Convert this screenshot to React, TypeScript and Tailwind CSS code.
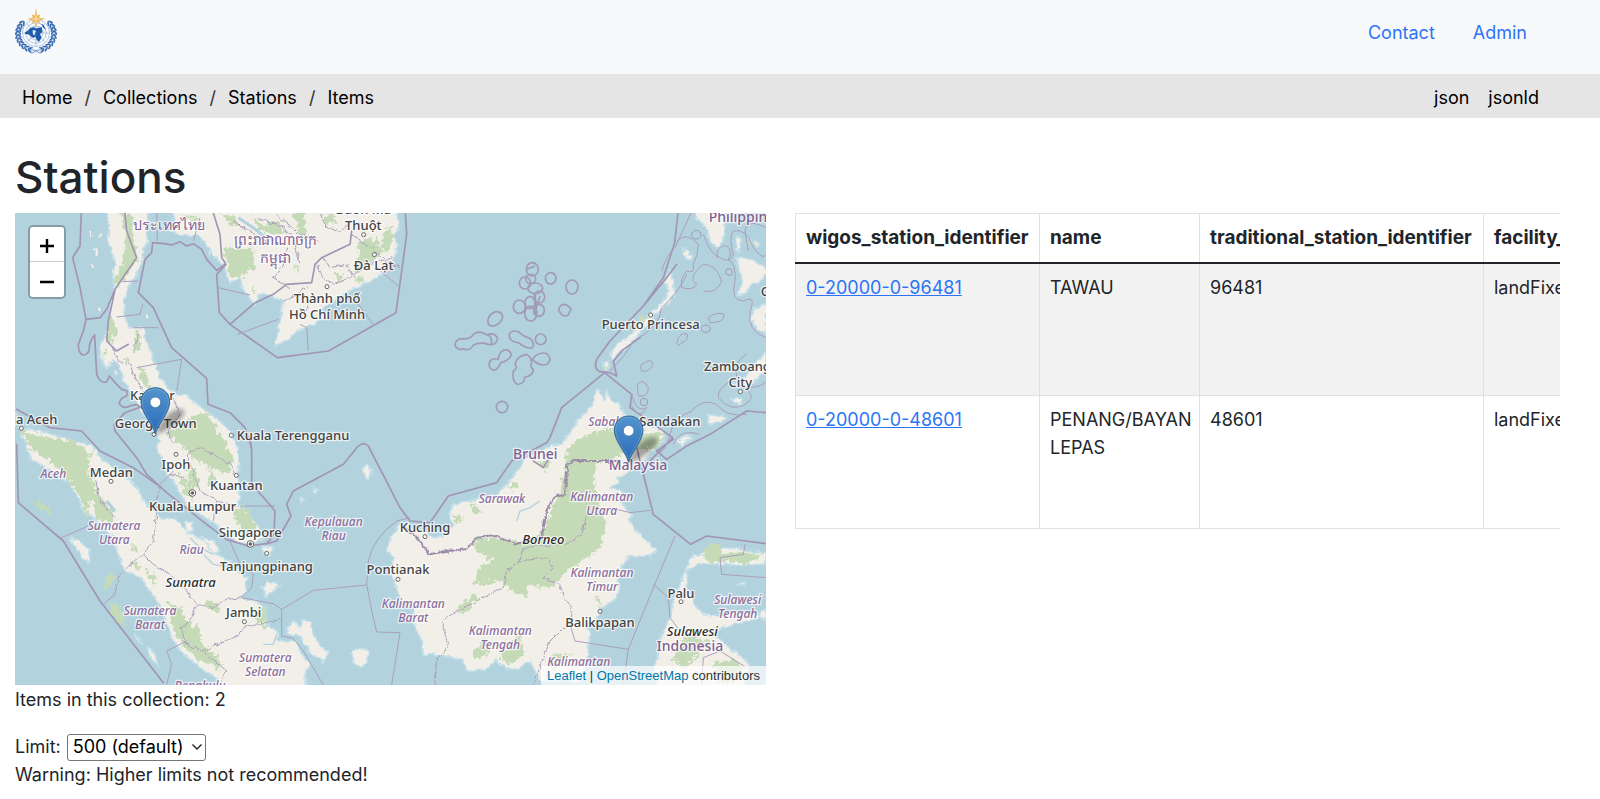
import React from "react";

type LabelKind = "city" | "province" | "country" | "island";
type Label = [number, number, string, LabelKind, ("start" | "end")?];

const labels: Label[] = [
  [507, 687, "ประเทศไทย", "country"],
  [825, 733, "ព្រះរាជាណាចក្រ", "country"],
  [826, 785, "កម្ពុជា", "country"],
  [1090, 638, "Buôn Ma", "city"],
  [1090, 687, "Thuột", "city"],
  [1121, 806, "Đà Lạt", "city"],
  [981, 905, "Thành phố", "city"],
  [981, 953, "Hồ Chí Minh", "city"],
  [457, 1197, "Kangar", "city"],
  [467, 1280, "George Town", "city"],
  [172, 1269, "Banda Aceh", "city", "end"],
  [710, 1316, "Kuala Terengganu", "city", "start"],
  [2126, 662, "Philippines", "country", "start"],
  [1952, 985, "Puerto Princesa", "city"],
  [2112, 1111, "Zamboanga", "city", "start"],
  [2221, 1159, "City", "city"],
  [2282, 884, "Cebu", "city", "start"],
  [1765, 1274, "Sabah", "province", "start"],
  [1918, 1275, "Sandakan", "city", "start"],
  [528, 1405, "Ipoh", "city"],
  [334, 1428, "Medan", "city"],
  [160, 1431, "Aceh", "province"],
  [709, 1467, "Kuantan", "city"],
  [578, 1529, "Kuala Lumpur", "city"],
  [342, 1587, "Sumatera", "province"],
  [343, 1629, "Utara", "province"],
  [751, 1607, "Singapore", "city"],
  [1001, 1574, "Kepulauan", "province"],
  [1001, 1617, "Riau", "province"],
  [575, 1660, "Riau", "province"],
  [799, 1710, "Tanjungpinang", "city"],
  [572, 1759, "Sumatra", "island"],
  [731, 1849, "Jambi", "city"],
  [450, 1842, "Sumatera", "province"],
  [450, 1885, "Barat", "province"],
  [796, 1983, "Sumatera", "province"],
  [796, 2025, "Selatan", "province"],
  [600, 2067, "Bengkulu", "province"],
  [1606, 1375, "Brunei", "country"],
  [1914, 1406, "Malaysia", "country"],
  [1506, 1505, "Sarawak", "province"],
  [1805, 1501, "Kalimantan", "province"],
  [1805, 1543, "Utara", "province"],
  [1275, 1592, "Kuching", "city"],
  [1630, 1630, "Borneo", "island"],
  [1194, 1719, "Pontianak", "city"],
  [1806, 1727, "Kalimantan", "province"],
  [1806, 1769, "Timur", "province"],
  [2043, 1791, "Palu", "city"],
  [1240, 1821, "Kalimantan", "province"],
  [1240, 1864, "Barat", "province"],
  [2213, 1808, "Sulawesi", "province"],
  [2213, 1850, "Tengah", "province"],
  [1800, 1877, "Balikpapan", "city"],
  [1501, 1901, "Kalimantan", "province"],
  [1501, 1943, "Tengah", "province"],
  [2077, 1905, "Sulawesi", "island"],
  [2070, 1949, "Indonesia", "country"],
  [1736, 1994, "Kalimantan", "province"],
];

const labelStyle: Record<LabelKind, string> = {
  city: "fill-[#444444] text-[39px] font-medium",
  province: "fill-[#8d6e9b] text-[36px] italic font-medium",
  country: "fill-[#816090] text-[42px] font-medium",
  island: "fill-[#2d2d2d] text-[39px] italic font-medium",
};

const towns: [number, number][] = [
  [1091, 701], [1123, 761], [981, 857], [64, 1282], [694, 1303], [1952, 942], [2221, 1172],
  [528, 1360], [333, 1441], [709, 1423], [800, 1657], [733, 1862], [1275, 1607], [1194, 1735],
  [1800, 1831], [2043, 1802], [462, 1300],
];

const capitals: [number, number][] = [[577, 1476], [751, 1629]];

const reefs: [number, number, number, number][] = [
  [457, 205, 18, 20], [452, 234, 15, 14], [435, 246, 17, 18], [466, 262, 22, 16], [512, 232, 16, 17],
  [576, 258, 18, 21], [478, 288, 16, 18], [418, 317, 18, 20], [450, 305, 15, 18], [477, 328, 16, 18],
  [452, 338, 18, 22], [482, 415, 16, 16], [366, 618, 17, 17], [792, 603, 11, 11], [1047, 213, 10, 10],
  [949, 101, 14, 13], [977, 383, 14, 11],
];

function Pin({ x, y }: { x: number; y: number }) {
  return (
    <g transform={`translate(${x} ${y})`}>
      <path d="M0 0C14-52 62-88 84-74 100-58 42-12 0 0Z" fill="#000" opacity=".33" filter="url(#soft)" />
      <path
        d="M0-2C-6-28-43-66-43-98-43-124-24-141 0-141S43-124 43-98C43-66 6-28 0-2Z"
        fill="url(#pinFill)"
        stroke="#2e6c97"
        strokeWidth="3"
      />
      <path d="M0-12C-7-34-39-69-39-98-39-121-22-137 0-137S39-121 39-98C39-69 7-34 0-12Z" fill="none" stroke="#fff" strokeOpacity=".15" strokeWidth="3" />
      <circle cy="-97" r="16" fill="#fff" stroke="#2e6c97" strokeWidth="2" />
    </g>
  );
}

function StationMap() {
  return (
    <svg
      viewBox="45 636 2253 1416"
      preserveAspectRatio="xMidYMid slice"
      className="block h-full w-full"
      role="img"
      aria-label="Map of stations"
    >
      <defs>
        <linearGradient id="pinFill" x1="0" y1="0" x2="0" y2="1">
          <stop offset="0" stopColor="#5394cd" />
          <stop offset="1" stopColor="#2a69b8" />
        </linearGradient>
        <filter id="soft" x="-30%" y="-30%" width="160%" height="160%">
          <feGaussianBlur stdDeviation="7" />
        </filter>
        <filter id="coast" filterUnits="userSpaceOnUse" x="0" y="600" width="2400" height="1500">
          <feTurbulence type="fractalNoise" baseFrequency="0.06" numOctaves="3" seed="4" />
          <feDisplacementMap in="SourceGraphic" scale="16" xChannelSelector="R" yChannelSelector="G" />
        </filter>
        <filter id="wood" filterUnits="userSpaceOnUse" x="0" y="600" width="2400" height="1500">
          <feTurbulence type="fractalNoise" baseFrequency="0.07" numOctaves="3" seed="9" />
          <feDisplacementMap in="SourceGraphic" scale="34" xChannelSelector="R" yChannelSelector="G" />
        </filter>
      </defs>
      <rect x="0" y="600" width="2400" height="1500" fill="#b2d2dd" />

      {/* Land masses */}
      <g filter="url(#coast)" fill="#f2efe9" stroke="#c3dfe9" strokeWidth="5" strokeLinejoin="round">
        <path d="M312 600L328 670 322 720 345 780 338 830 345 870 332 900 326 980 302 1030 300 1070 322 1105 340 1075 362 1100 365 1130 385 1160 400 1190 432 1240 462 1290 480 1320 472 1340 488 1380 500 1415 520 1440 540 1475 560 1510 600 1540 640 1565 680 1600 720 1625 750 1632 780 1620 790 1605 770 1570 740 1535 715 1510 720 1480 712 1430 718 1380 712 1340 700 1310 690 1290 660 1260 600 1215 560 1180 530 1180 505 1160 480 1130 470 1095 455 1060 440 1020 430 980 385 980 372 940 372 900 385 860 408 825 424 790 430 750 442 720 444 600Z" />
        <path d="M520 600L520 670 508 690 540 702 600 706 625 740 650 770 670 795 690 845 722 830 725 860 748 890 768 915 776 880 800 878 850 900 840 960 830 1010 822 1034 862 1020 890 990 950 965 990 940 955 928 1000 900 1050 870 1090 850 1130 830 1160 810 1182 780 1190 730 1184 700 1200 680 1180 600Z" />
        <path d="M60 1280L100 1288 150 1298 200 1314 250 1326 280 1335 300 1370 370 1420 420 1470 440 1512 465 1530 480 1550 530 1555 560 1590 612 1620 650 1660 702 1690 720 1720 745 1730 735 1750 740 1770 725 1790 770 1800 795 1820 800 1870 835 1895 830 1920 890 1920 900 1950 930 1990 915 2020 920 2080 660 2080 650 2030 600 2000 550 1960 520 1920 500 1860 480 1810 450 1770 420 1730 375 1710 355 1660 340 1610 290 1555 255 1540 235 1490 200 1440 150 1410 90 1370Z" />
        <path d="M1200 1570L1170 1610 1160 1650 1180 1670 1175 1720 1195 1780 1240 1820 1245 1880 1265 1920 1270 1965 1305 1960 1390 1975 1400 2010 1460 2005 1485 1980 1520 2000 1545 2008 1590 1980 1620 2040 1740 2040 1765 1960 1765 1920 1775 1900 1760 1880 1790 1850 1805 1820 1840 1800 1860 1765 1855 1740 1865 1700 1885 1665 1950 1665 1970 1650 1940 1620 1910 1590 1885 1555 1897 1545 1875 1520 1860 1500 1865 1470 1830 1460 1860 1445 1850 1430 1890 1412 1925 1385 1960 1350 1990 1320 1995 1290 1940 1270 1870 1240 1860 1210 1830 1195 1822 1165 1810 1200 1798 1165 1785 1170 1780 1210 1740 1250 1712 1290 1690 1325 1640 1340 1600 1360 1570 1380 1550 1410 1520 1450 1490 1480 1430 1495 1360 1510 1345 1540 1360 1570 1340 1600 1300 1610 1270 1590 1230 1575Z" />
        <path d="M2298 1655L2240 1650 2180 1640 2140 1635 2110 1660 2075 1665 2060 1700 2045 1740 2035 1760 2020 1800 2010 1850 1985 1900 1975 1960 1960 2000 1975 2060 2230 2060 2250 1990 2215 1960 2180 1935 2150 1905 2145 1885 2190 1875 2240 1860 2298 1840 2250 1840 2200 1835 2140 1845 2110 1840 2085 1810 2060 1760 2060 1710 2095 1690 2150 1690 2230 1692 2298 1690Z" />
        <path d="M1828 1060L1850 1030 1890 1000 1930 960 1960 930 1995 895 2005 870 1995 840 2010 805 2020 845 2025 880 2000 910 1960 945 1930 985 1890 1030 1850 1060 1838 1075Z" />
        <path d="M1815 1110L1808 1090 1822 1078 1828 1100Z" />
        <path d="M2080 600L2090 650 2120 680 2130 720 2155 745 2172 710 2170 600Z" />
        <path d="M2210 770L2255 775 2298 800 2298 830 2260 850 2230 880 2212 885 2225 845Z" />
        <path d="M2298 910L2265 920 2250 950 2275 990 2298 1000Z" />
        <path d="M2298 1050L2265 1090 2225 1140 2190 1150 2240 1160 2298 1110Z" />
        <path d="M2045 740L2065 750 2078 770 2060 780Z" />
        <path d="M2210 708L2222 710 2218 755 2208 745Z M2245 710L2280 728 2270 738Z" />
        <path d="M2195 1195L2228 1190 2220 1215 2205 1208Z M2120 1245L2165 1240 2180 1255 2130 1270Z M2030 1320L2060 1300 2075 1310 2045 1335Z" />
        <path d="M860 1880L880 1860 900 1880 910 1855 935 1862 940 1900 960 1935 985 1950 970 1985 925 1950 900 1905 865 1900Z" />
        <path d="M1055 1950L1080 1938 1105 1950 1100 1990 1080 1998 1058 1985Z" />
        <path d="M210 1612L235 1615 270 1650 268 1685 250 1675Z M405 1895L428 1930 410 1915Z M440 1935L465 1960 476 1998 448 1965Z" />
        <path d="M555 1565L578 1562 580 1585 562 1600Z M600 1605L640 1620 660 1650 640 1655Z M785 1760L800 1740 838 1752 800 1790Z" />
        <path d="M1085 1405L1100 1390 1118 1410 1100 1438Z M900 1490L915 1490 905 1505Z M940 1460L955 1470 945 1480Z M785 1635L820 1640 810 1665 790 1660Z" />
        <path d="M2280 1830L2298 1825 2298 1860 2282 1850Z M2210 1750L2240 1740 2230 1755Z" />
        <path d="M270 690L275 705M285 740L290 765M300 700L302 712M295 920L300 930M275 790L280 800M625 750L632 760M440 940L443 950M345 1110L350 1120" stroke="#f2efe9" strokeWidth="6" />
      </g>

      {/* Forest cover */}
      <g filter="url(#wood)" fill="#c5dab6">
        <path d="M360 630L395 640 402 720 410 770 385 820 355 860 340 850 365 790 380 720Z" />
        <path d="M325 950L345 960 348 1000 330 1030 318 1010Z M405 1000L425 980 420 1050 400 1060Z M415 1090L440 1120 450 1160 425 1150Z M310 1040L322 1050 315 1080Z M375 1060L390 1075 380 1090Z" />
        <path d="M670 740L760 745 765 800 720 830 690 830Z M880 640L910 620 920 700 905 720Z M1080 720L1130 710 1150 760 1110 780 1060 830Z M1145 690L1180 680 1175 740 1150 750Z M750 640L800 680 820 660 860 690 830 700 780 690Z M1000 820L1030 820 1020 850Z" />
        <path d="M660 640L700 645 720 680 690 670Z M960 650L1000 640 1010 665 980 670Z M880 790L900 800 890 820Z M760 850L772 880 762 890Z M540 640L600 650 590 665Z M1060 840L1090 820 1085 845Z" />
        <path d="M500 1300L560 1260 620 1230 660 1300 700 1370 690 1420 640 1400 590 1380 540 1330Z M560 1400L590 1410 600 1450 570 1470Z M530 1420L555 1430 580 1500 555 1480Z M690 1520L740 1520 770 1580 730 1600Z M630 1400L650 1430 640 1470 620 1440Z" />
        <path d="M65 1290L140 1310 220 1320 270 1355 265 1420 275 1480 260 1550 235 1480 200 1430 140 1370 90 1340Z" />
        <path d="M270 1400L290 1480 340 1530 330 1570 290 1550 270 1480Z M390 1620L420 1660 400 1650Z M435 1700L470 1730 460 1760Z M385 1680L420 1690 415 1705Z" />
        <path d="M500 1800L545 1820 555 1860 600 1880 600 1930 650 1960 665 2000 600 1980 560 1940 520 1890Z M620 1795L665 1820 655 1835 625 1820Z M770 1820L800 1830 795 1880 770 1870Z M330 1810L355 1808 380 1875 345 1860Z M95 1500L120 1502 160 1540 130 1530Z" />
        <path d="M1700 1350L1800 1325 1840 1330 1800 1380 1780 1430 1800 1520 1820 1570 1800 1640 1760 1670 1700 1710 1650 1760 1580 1750 1580 1790 1540 1770 1500 1740 1420 1750 1440 1700 1480 1680 1420 1640 1430 1610 1500 1610 1560 1625 1620 1600 1640 1560 1670 1490 1695 1420Z" />
        <path d="M1700 1340L1760 1300 1850 1280 1900 1330 1830 1380 1720 1385Z M1900 1300L1990 1290 1980 1340 1900 1350Z" />
        <path d="M1530 1440L1560 1450 1530 1470Z M1610 1380L1660 1380 1640 1410Z M1370 1820L1420 1780 1440 1790 1390 1840Z M1420 1950L1460 1910 1460 1960 1430 1980Z M1500 1960L1560 1900 1570 1960 1540 1990 1500 1975Z M1780 1780L1800 1790 1800 1820Z M1650 1960L1720 1960 1650 2010Z" />
        <path d="M2110 1660L2125 1630 2165 1630 2170 1660 2230 1650 2280 1670 2230 1690 2180 1680 2120 1685Z M2010 1980L2060 1900 2150 1930 2100 1950 2060 2000Z M2140 1990L2200 1970 2230 2000 2200 2050 2150 2040Z" />
        <path d="M1910 955L1950 940 1930 965Z M2045 740L2060 755 2050 755Z M1812 1092L1822 1090 1818 1105Z M2250 720L2270 725 2260 732Z M1410 1500L1440 1530 1420 1540Z M1350 1540L1390 1550 1370 1570Z" />
        <path d="M1820 1142L1832 1140 1826 1150Z M325 1720L345 1725 320 1770 310 1755Z" />
      </g>

      {/* Rivers */}
      <g fill="none" stroke="#b2d2dd" strokeWidth="4">
        <path d="M1550 1560L1560 1530 1590 1520 1620 1500M640 1660L600 1640 570 1610M700 1700L640 1690 610 1660M830 1900L820 1930 790 1930M1330 1600L1350 1580" />
        <path d="M715 650L760 680 790 705M320 1500L345 1530 330 1520" strokeWidth="9" />
      </g>

      {/* Maritime boundaries */}
      <g fill="none" stroke="#a295b4" strokeWidth="5" strokeLinejoin="round" strokeLinecap="round">
        <path d="M244 636L240 735 218 770 240 860 258 955 250 990 235 1030Q235 1060 250 1062 270 1060 268 1035 272 1015 284 1002L290 1120Q300 1148 320 1143L328 1125 350 1150 365 1165 382 1170 380 1185Q360 1190 358 1208 370 1226 390 1215L410 1210 430 1225" />
        <path d="M430 1215L375 1235 342 1270 345 1290 410 1370 440 1420 500 1475 620 1570 680 1615 745 1635 800 1628 822 1600 825 1530 800 1500 755 1450 755 1350 750 1310" />
        <path d="M375 636L380 690 410 770 345 865 320 925 300 950 258 955M345 865L325 960 320 1020 350 1050 385 1030" />
        <path d="M458 725L495 728 515 732 540 722 560 735 580 728 605 745 620 775 650 808 675 790M458 725L455 755 435 775 415 875 460 920 515 1040 620 1132 624 1210 690 1235 735 1280 755 1340" />
        <path d="M640 636L660 700 665 770 678 790 650 820 658 935 690 970 832 1070 985 1050 1188 935 1220 700 1216 636M690 970L765 905 820 880 860 850 935 845 945 790 965 770 1050 730 1055 690" />
        <path d="M50 1225L150 1280 245 1290 300 1350 400 1400 470 1450M50 1330L55 1505 190 1620 300 1800 490 2045" />
        <path d="M800 1628L830 1620 873 1545 860 1510 880 1470 1030 1390 1072 1338Q1090 1320 1105 1335L1200 1520 1230 1560 1290 1565 1345 1485 1490 1445 1535 1380 1640 1325 1650 1310 1685 1220 1814 1115 1895 1180 1890 1220 2018 1310 1940 1390" />
        <path d="M2034 636L2024 725 1990 830 1930 915 1830 1020 1790 1075Q1780 1105 1800 1112L1830 1115 1850 1125 1840 1080 1870 1045 1920 1010M1930 915L2000 830 2030 790" />
        <path d="M1910 1340L1960 1540 2072 1630 2120 1605 2298 1628M2298 1235L2240 1230 2130 1300 2060 1335 2000 1375 1970 1350 2020 1315" />
        <path d="M1215 1580L1240 1600 1290 1660 1340 1650 1400 1645 1430 1610 1490 1605 1545 1630 1625 1610 1640 1530 1660 1490 1695 1480 1702 1390 1720 1380 1850 1380" strokeWidth="6" stroke="#9c8caa" filter="url(#coast)" />
        <path d="M1600 1380L1630 1400 1645 1375" />
      </g>

      {/* Provincial borders and territorial waters */}
      <g fill="none" stroke="#ab9fbc" strokeWidth="3" strokeLinejoin="round">
        <path d="M365 842L415 840M350 948L420 940 428 910M400 980L475 980M410 1100L545 1075 530 1170M712 1000L835 955M925 1050L920 980 900 970M1120 970L1060 890M1130 800L1195 855M655 860L750 882M470 636L472 720M580 720L600 650" />
        <g filter="url(#coast)">
          <path d="M340 1040L355 1080 390 1090 400 1120 430 1170M770 650L850 680 880 710 900 790M950 790L970 830 1000 850 1050 830 1100 790 1180 770M830 640L900 700 960 720M1050 700L1110 740 1160 780 1200 800" />
          <path d="M960 640L980 680 1020 690 1060 660 1100 680M860 740L850 790 820 830 870 860M700 660L760 700 800 720 840 710M970 770L990 800 1040 790 1060 830M900 870L930 900 910 940M850 900L890 880 920 860M415 1000L400 1040M500 1290L520 1330" />
          <path d="M510 1170L540 1240 500 1300M560 1360L600 1340 640 1360 690 1390 705 1420M560 1360L590 1440 600 1470 650 1500 735 1520M510 1420L560 1430M640 1560L650 1500" />
          <path d="M345 1780L355 1730 390 1690 430 1660 460 1620 470 1540 480 1450M430 1660L460 1690 510 1720 560 1770 590 1810 640 1820 680 1795 725 1790" />
          <path d="M590 1810L570 1860 540 1880 560 1930 610 1950 720 1900 730 1880 845 1855M280 1400L300 1500 345 1550M610 1950L680 2010 660 2052" />
          <path d="M1305 2052L1310 1970 1345 1940 1325 1860 1370 1830 1510 1760 1520 1710 1560 1680 1640 1670 1660 1700 1630 1730 1680 1750 1690 1790 1715 1820 1710 1860 1650 1920 1600 2052M1560 1680L1570 1640 1710 1625 1745 1600 1760 1540" />
        </g>
        <path d="M825 1515L735 1515M690 1620L720 1690 760 1720 755 1760 725 1790M180 1612L265 1575M310 1810L345 1780M480 1450L520 1410M725 1790L820 1808 845 1825 845 1905 880 1912 910 1950 970 2052M500 2050L515 1990 500 1950 560 1920" />
        <path d="M845 1825L940 1768 1100 1752M1230 1550L1190 1560Q1120 1610 1105 1680L1100 1750 1115 1830 1130 1893 1200 1895 1175 2052" />
        <path d="M1830 1520L1890 1535 1950 1528M2025 1605L1960 1760 1885 1945 1870 2052M1885 1945L1725 1920 1710 1870M1960 1750L2005 1790 2010 1850 2040 1890 2090 1910M2235 1630L2230 1660 2160 1670 2165 1720 2298 1730M2105 2050L2110 1970 2160 1950 2240 2000" />
        <path d="M2030 720Q2060 690 2095 730Q2095 760 2080 790Q2085 820 2060 810Q2040 830 2045 860Q2080 870 2090 850Q2060 830 2110 790Q2150 790 2165 840Q2150 880 2110 870M1985 810Q2000 760 2025 740L2080 620M2110 700Q2130 760 2160 770Q2190 790 2200 760Q2185 710 2200 690Q2240 680 2260 740Q2290 780 2298 760M2150 770Q2150 730 2180 735Q2200 750 2185 775Q2210 790 2205 840Q2190 900 2230 900Q2270 880 2250 930Q2240 990 2298 1010M2298 680Q2240 650 2235 690L2245 750" />
        <path d="M2240 1060Q2200 1080 2210 1130Q2150 1160 2155 1190Q2190 1230 2225 1215Q2280 1190 2230 1160Q2290 1160 2298 1140M2075 1230Q2110 1190 2150 1210Q2180 1250 2240 1240M2075 1230Q2020 1250 2010 1300Q2000 1350 1970 1360M1895 1180Q1910 1240 1940 1220Q1920 1260 1895 1215M2020 1330Q2040 1280 2100 1300" />
        <path d="M1925 1110Q1915 1090 1935 1085Q1955 1070 1958 1090Q1950 1115 1925 1110ZM2030 1025Q2040 990 2062 1000Q2065 1020 2045 1025Q2035 1040 2030 1025ZM2125 950Q2150 930 2172 940Q2175 965 2130 965ZM1912 1150Q1930 1130 1945 1160Q1945 1190 1915 1185Z" />
        <path d="M1830 1110Q1880 1060 1900 1020Q1980 980 1985 920Q2040 870 2060 820" />
      </g>

      {/* Reef rings */}
      <g transform="translate(1140 600)" fill="none" stroke="#a39ab8" strokeWidth="5">
        {reefs.map(([cx, cy, rx, ry], i) => (
          <ellipse key={i} cx={cx} cy={cy} rx={rx} ry={ry} strokeWidth={cx > 700 ? 3 : 5} />
        ))}
        <path d="M326 370Q318 350 338 336Q360 325 368 345Q366 365 345 374Q332 377 326 370ZM536 328Q540 305 560 312L573 323 565 342Q548 352 536 328Z" />
        <path d="M240 413Q222 420 226 436Q236 450 250 443Q270 452 280 432Q300 422 325 430Q350 435 353 412Q342 392 320 402Q300 386 280 400Q272 416 240 413ZM325 400Q340 415 332 432M465 280L470 340M480 285L462 342M440 205L465 195" />
        <path d="M387 402Q395 385 415 392Q428 405 450 412Q465 425 458 440Q440 445 415 425Q390 425 387 402ZM330 480Q340 470 355 475Q355 455 372 447Q392 445 394 463Q385 480 362 485Q355 505 340 508Q322 500 330 480Z" />
        <path d="M405 490Q410 465 440 460Q455 470 455 485Q450 500 460 505Q458 525 435 528Q432 550 412 550Q395 540 400 510Q415 500 405 490ZM457 475Q475 450 500 458Q520 475 500 490Q480 498 457 475Z" />
      </g>

      {/* Settlements */}
      <g fill="#fff" stroke="#666" strokeWidth="3">
        {towns.map(([x, y]) => (
          <circle key={`${x}-${y}`} cx={x} cy={y} r="6" />
        ))}
        {capitals.map(([x, y]) => (
          <g key={`${x}-${y}`}>
            <circle cx={x} cy={y} r="10" />
            <circle cx={x} cy={y} r="4" fill="#555" />
          </g>
        ))}
      </g>

      <g
        stroke="#fff"
        strokeOpacity=".7"
        strokeWidth="8"
        strokeLinejoin="round"
        paintOrder="stroke"
        className="font-['Noto_Sans','DejaVu_Sans',sans-serif]"
      >
        {labels.map(([x, y, text, kind, anchor]) => (
          <text key={`${x}-${y}`} x={x} y={y} textAnchor={anchor ?? "middle"} className={labelStyle[kind]}>
            {text}
          </text>
        ))}
      </g>

      <Pin x={466} y={1301} />
      <Pin x={1886} y={1386} />
    </svg>
  );
}

const leaves = Array.from({ length: 10 }, (_, i) => 105 + i * 12.5);

function Emblem() {
  const branch = leaves.map((deg) => {
    const a = (deg * Math.PI) / 180;
    return (
      <g key={deg} transform={`translate(${42 + 36 * Math.cos(a)} ${52 + 33 * Math.sin(a)}) rotate(${deg + 90})`}>
        <ellipse cx="1" cy="-4" rx="5.500" ry="1.900" transform="rotate(30)" />
        <ellipse cx="1" cy="4" rx="5.500" ry="1.900" transform="rotate(-30)" />
      </g>
    );
  });
  return (
    <svg viewBox="0 0 84 92" className="h-[46px] w-[42px]" role="img" aria-label="World Meteorological Organization">
      <g fill="none" stroke="#9fbbdd" strokeWidth="1.6">
        <circle cx="42" cy="50" r="27" fill="#f8fafc" />
        <circle cx="42" cy="50" r="20.500" />
        <circle cx="42" cy="50" r="14" />
        <circle cx="42" cy="50" r="7" />
        <path d="M15 50H69M42 23V77M23 31L61 69M61 31L23 69" />
      </g>
      <g fill="#3b6db2">
        {branch}
        <g transform="translate(84 0) scale(-1 1)">{branch}</g>
      </g>
      <path d="M28 83Q40 82 51 91M56 83Q44 82 33 91" stroke="#6c93c7" strokeWidth="2" fill="none" />
      <path
        d="M20 49L26 45 29 41 38 38 41 41 53 38 55 48 50 52 53 59 48 68 43 63 41 57 37 60 32 57 28 53 20 52ZM52 31L57 34 62 43 57 40Z"
        fill="#1f5ba8"
      />
      <path d="M35 45Q40 42 42 47 38 51 41 55L36 53Z" fill="#dfe9f4" />
      <path d="M42 0L44.500 15 51 13 48 19 61 22 48 25 51 31 44.500 28 42 40 39.500 28 33 31 36 25 24 22 36 19 33 13 39.500 15Z" fill="#eeb45a" />
      <path d="M42 6L43.500 20.500 55 22 43.500 23.500 42 34 40.500 23.500 30 22 40.500 20.500Z" fill="#fbe0a4" />
    </svg>
  );
}

const crumbs = ["Home", "Collections", "Stations", "Items"];

const stations = [
  { id: "0-20000-0-96481", name: "TAWAU", traditional: "96481", facility: "landFixed" },
  { id: "0-20000-0-48601", name: "PENANG/BAYAN LEPAS", traditional: "48601", facility: "landFixed" },
];

export default function App() {
  return (
    <div className="min-h-screen bg-white font-['Inter','Liberation_Sans',sans-serif] text-[18px] leading-7 text-[#212529]">
      <header className="flex h-[74px] items-start justify-between bg-[#f8f9fb] pt-2 pr-[73px] pl-[15px]">
        <a href="#home">
          <Emblem />
        </a>
        <nav className="flex gap-[38px] pt-[11px] text-[#2c74f5]">
          <a href="#contact">Contact</a>
          <a href="#admin">Admin</a>
        </nav>
      </header>

      <div className="flex h-11 items-center justify-between bg-[#e5e5e5] pt-[3px] pr-[61px] pl-[22px] text-black">
        <nav aria-label="Breadcrumb">
          <ol className="flex">
            {crumbs.map((crumb, i) => (
              <li key={crumb}>
                {i > 0 && <span className="px-3 text-[#333]">/</span>}
                <a href={`#${crumb.toLowerCase()}`}>{crumb}</a>
              </li>
            ))}
          </ol>
        </nav>
        <div className="flex gap-[19px]">
          <a href="#json">json</a>
          <a href="#jsonld">jsonld</a>
        </div>
      </div>

      <main className="pt-8 pr-10 pl-[15px]">
        <h1 className="pb-[9px] text-[44px] leading-[54px] font-medium">Stations</h1>
        <div className="grid grid-cols-[751fr_765fr] gap-[29px]">
          <section>
            <div className="relative aspect-[751/472] overflow-hidden">
              <StationMap />
              <div className="absolute top-3 left-[13px] flex flex-col overflow-hidden rounded-[5px] border-2 border-black/25 bg-clip-padding">
                <button type="button" aria-label="Zoom in" className="flex h-[35px] w-[34px] items-center justify-center border-b border-[#ccc] bg-white pt-1">
                  <svg viewBox="0 0 14 14" className="h-[14px] w-[14px]" stroke="#000" strokeWidth="2.4">
                    <path d="M0 7H14M7 0V14" />
                  </svg>
                </button>
                <button type="button" aria-label="Zoom out" className="flex h-[35px] w-[34px] items-center justify-center bg-white pt-1">
                  <svg viewBox="0 0 14 14" className="h-[14px] w-[14px]" stroke="#000" strokeWidth="2.4">
                    <path d="M0 7H14" />
                  </svg>
                </button>
              </div>
              <div className="absolute right-0 bottom-0 bg-white/70 px-[6px] font-['Liberation_Sans',Arial,sans-serif] text-[13px] leading-[19px] text-[#333]">
                <a href="#leaflet" className="text-[#0078a8]">Leaflet</a> |{" "}
                <a href="#osm" className="text-[#0078a8]">OpenStreetMap</a> contributors
              </div>
            </div>
            <p className="pt-px">Items in this collection: 2</p>
            <div className="flex items-center gap-[6px] pt-[19px]">
              <label htmlFor="limit">Limit:</label>
              <div className="relative">
                <select id="limit" className="block h-[27px] w-[139px] appearance-none rounded-[3px] border border-[#767676] bg-white pl-[5px] text-[18px] leading-6 text-black">
                  <option>500 (default)</option>
                  <option>1000</option>
                  <option>2000</option>
                </select>
                <svg viewBox="0 0 10 6" className="pointer-events-none absolute top-[10px] right-1 h-[6px] w-[10px]" fill="none" stroke="#222" strokeWidth="1.4">
                  <path d="M.5.5L5 5 9.500.5" />
                </svg>
              </div>
            </div>
            <p>Warning: Higher limits not recommended!</p>
          </section>

          <section className="overflow-hidden">
            <table className="w-[880px] table-fixed border-collapse text-left">
              <colgroup>
                <col className="w-[244px]" />
                <col className="w-[160px]" />
                <col className="w-[284px]" />
                <col />
              </colgroup>
              <thead>
                <tr className="h-[49px] border-b-2 border-[#212529]">
                  {["wigos_station_identifier", "name", "traditional_station_identifier", "facility_type"].map((h) => (
                    <th key={h} className="border-x border-t border-x-[#dee2e6] border-t-[#dee2e6] px-[10px] text-[19px] font-bold">
                      {h}
                    </th>
                  ))}
                </tr>
              </thead>
              <tbody>
                {stations.map((s) => (
                  <tr key={s.id} className="h-[133px] align-top odd:bg-[#f2f2f2]">
                    <td className="border border-[#dee2e6] px-[10px] pt-[10px]">
                      <a href={`#${s.id}`} className="text-[#2c74f5] underline">{s.id}</a>
                    </td>
                    <td className="border border-[#dee2e6] px-[10px] pt-[10px]">{s.name}</td>
                    <td className="border border-[#dee2e6] px-[10px] pt-[10px]">{s.traditional}</td>
                    <td className="border border-[#dee2e6] px-[10px] pt-[10px]">{s.facility}</td>
                  </tr>
                ))}
              </tbody>
            </table>
          </section>
        </div>
      </main>
    </div>
  );
}
